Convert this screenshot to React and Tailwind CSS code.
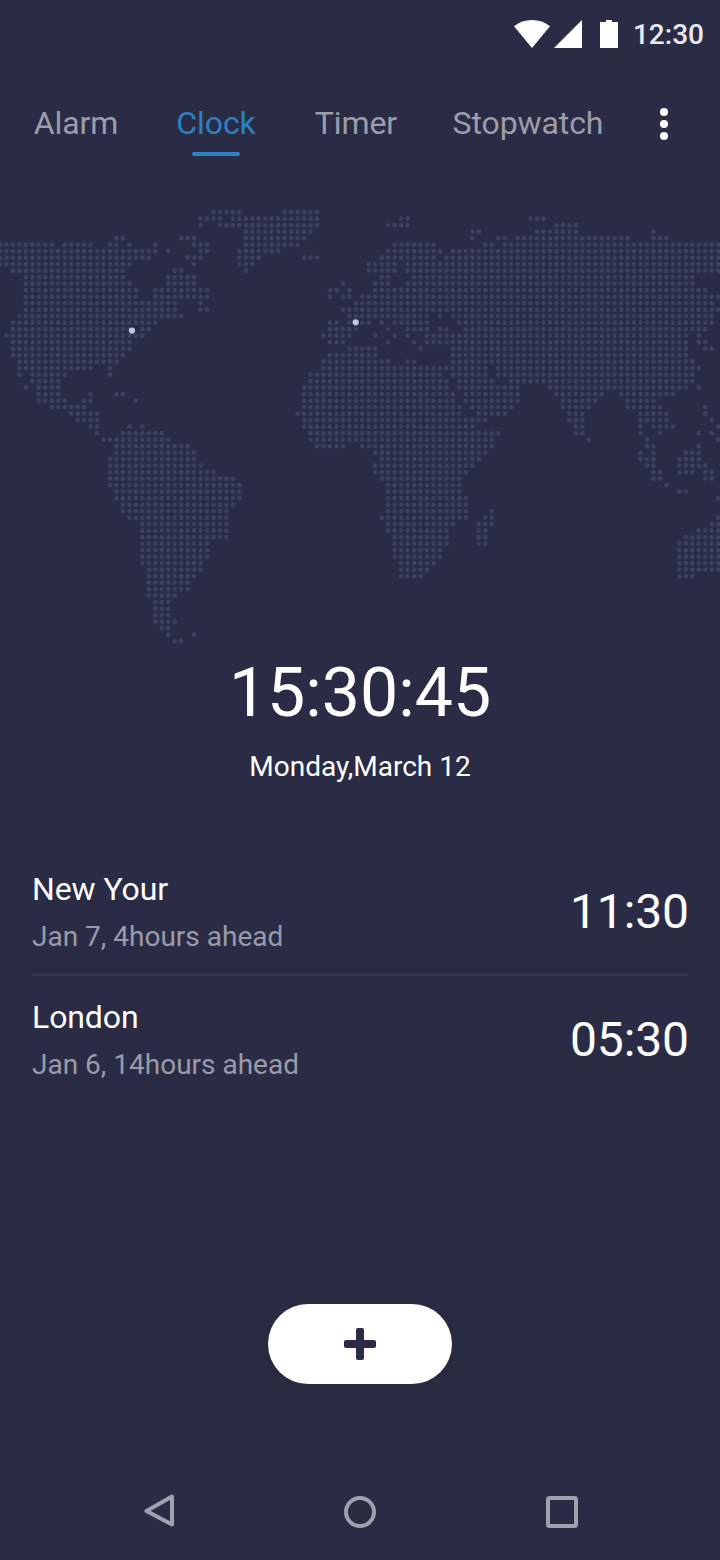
import React from "react";

// Land mass of the world map: for each row of dots, the [first, last] columns that are filled.
const LAND = [
  "33-37 44-49",
  "31-34 36-49 62-63 82-84",
  "31 34-49 60-63 86-89",
  "38-48 73-74 83-89 101",
  "18-19 28-30 38-47 73 77-78 80-97 101-103",
  "0-8 10-14 17-18 20 24 30-32 38-46 61-67 75-76 78-111",
  "0-24 26 31-32 37-43 60-68 70-111",
  "0-23 29-31 37-40 47-49 59-67 69-111",
  "0-20 30 37-39 57-61 63-111",
  "2-19 27-28 38 57-61 63-111",
  "4-19 26-30 59-60 64-107",
  "4-20 26-30 53 58-60 63-107",
  "4-21 24-32 51-52 54 58-109",
  "4-21 24-32 51 53-54 56-111",
  "4-27 31 55-110",
  "4-27 31-32 53-111",
  "3-28 54-66 68 70-110",
  "2-24 51-52 54-57 59 61-66 71-110",
  "2-20 22-23 51-55 60 63-66 68-69 72-109",
  "1-22 50-54 58 61 63 66-106 108",
  "2-20 51-53 60 64 66-106 108-109",
  "2-20 54-58 65 70-106 109-110",
  "2-19 51-58 70-106",
  "3-18 50-60 63-64 70-107",
  "3-14 17 50-75 77-108",
  "3 5-10 17 48-68 70-75 77-107",
  "5-9 48-69 71-76 79-107",
  "4 6-9 47-69 71-80 85-106 108",
  "6-9 14 18-19 47-70 72-80 86-93 96-104",
  "6-10 13-14 21 47-70 72-80 87-92 97-101",
  "8-13 47-71 73-79 87-91 97-102 109",
  "11-15 46-71 74-78 88-90 99-103 109",
  "12-15 47-75 88-90 99-103 110",
  "14-15 20 22 47-73 89-90 99 101-104 111",
  "15 19-25 48-77 89-90 99 102 108 110",
  "16-26 48-76 91 100 111",
  "18-29 49-53 56-76 100-101 108",
  "18-30 58-75 99 101 106-108",
  "17-30 59-74 99-101 105-108",
  "17-31 58-73 100-101 105-109",
  "17-33 58-72 101-102 105-107 109-110",
  "17-36 59-71 101-102 109-110",
  "17-37 60-71 103",
  "18-37 60-71 105-106",
  "18-37 60-72 111",
  "19-36 60-72",
  "19-35 60-72 76",
  "20-35 59-72 75-76 111",
  "22-35 60-70 74-76 110-111",
  "22-35 60-69 74-75 108-111",
  "22-35 61-69 74-75 106-111",
  "22-32 61-69 74-75 105-111",
  "22-32 61-68 105-111",
  "22-32 61-68 105-111",
  "22-31 62-67 105-111",
  "23-31 62-66 105-111",
  "23-30 62-65 105-107",
  "23-29",
  "23-29",
  "23-27",
  "24-26",
  "24-26",
  "24-26",
  "24-27",
  "25-26",
  "26 30",
  "27-28",
];

const DOTS = LAND.flatMap((row, r) =>
  row.split(" ").flatMap((run) => {
    const [a, b = a] = run.split("-").map(Number);
    return Array.from({ length: b - a + 1 }, (_, i) => [(a + i) * 6.47, 32.2 + r * 6.5]);
  })
);

const DOT_PATH = DOTS.map(
  ([x, y]) => `M${(x - 2.35).toFixed(2)} ${y.toFixed(2)}a2.35 2.35 0 1 0 4.7 0a2.35 2.35 0 1 0 -4.7 0`
).join("");

function StatusBar() {
  return (
    <header className="flex h-[68px] items-center justify-end pr-4">
      <svg className="h-7 w-[104px]" viewBox="0 0 104 28" fill="#fff">
        <path d="M0 6.2C5.2 2.2 11.4 0 18 0s12.800 2.200 18 6.200L18 28z" />
        <path d="M40 28L68 0v28z" />
        <path d="M86 2h6V0h6v2h6v26H86z" />
      </svg>
      <span className="ml-[15px] pt-0.5 text-[28px] leading-8 font-medium text-[#e9e9ec]">12:30</span>
    </header>
  );
}

function Tab({ label, active, wide }) {
  return (
    <button className={`flex flex-col items-center ${wide ? "w-[204px]" : "w-[140px]"}`}>
      <span className={`text-[32px] leading-[48px] tracking-[-0.1px] ${active ? "text-[#2d80c2]" : "text-[#9d9ca9]"}`}>
        {label}
      </span>
      {active && <span className="mt-[5px] h-1 w-12 rounded-full bg-[#2d80c2]" />}
    </button>
  );
}

function Tabs() {
  return (
    <nav className="flex h-28 items-start pt-[31px] pl-1.5">
      <Tab label="Alarm" />
      <Tab label="Clock" active />
      <Tab label="Timer" />
      <Tab label="Stopwatch" wide />
      <button className="flex h-[50px] w-[68px] flex-col items-center justify-center gap-1">
        <span className="size-2 rounded-full bg-white" />
        <span className="size-2 rounded-full bg-white" />
        <span className="size-2 rounded-full bg-white" />
      </button>
    </nav>
  );
}

function WorldMap() {
  return (
    <svg className="block h-[470px] w-[720px]" viewBox="0 0 720 470">
      <path d={DOT_PATH} fill="#3b405f" />
      <circle cx="132" cy="150.600" r="3.100" fill="#c3c7de" />
      <circle cx="355.700" cy="142.300" r="3.100" fill="#c3c7de" />
    </svg>
  );
}

function City({ name, detail, time }) {
  return (
    <li className="flex h-[128px] items-center justify-between">
      <div className="flex flex-col">
        <span className="text-[32px] leading-[48px] tracking-[-0.1px] text-white">{name}</span>
        <span className="text-[28px] leading-[46px] text-[#9a9aa8]">
          <span className="block pt-px leading-[45px]">{detail}</span>
        </span>
      </div>
      <span className="-mr-px text-[48px] leading-[56px] tracking-[-0.1px] text-white">{time}</span>
    </li>
  );
}

export default function App() {
  return (
    <div className="flex h-[1560px] w-[720px] flex-col overflow-hidden bg-[#2a2c45] font-['Roboto',sans-serif]">
      <StatusBar />
      <Tabs />
      <WorldMap />
      <section className="flex flex-col items-center pt-px text-white">
        <span className="text-[68px] leading-[84px]">15:30:45</span>
        <span className="mt-4 text-[28px] leading-8">Monday,March 12</span>
      </section>
      <ul className="mx-8 mt-[65px] flex flex-col">
        <City name="New Your" detail="Jan 7, 4hours ahead" time="11:30" />
        <li className="-mt-0.5 h-0.5 bg-[#36374d]" />
        <City name="London" detail="Jan 6, 14hours ahead" time="05:30" />
      </ul>
      <div className="mt-auto flex h-20 justify-center">
        <button className="flex h-20 w-[184px] items-center justify-center rounded-full bg-white shadow-[0_4px_24px_rgba(40,42,48,0.5)]">
          <svg className="size-8" viewBox="0 0 32 32" fill="#2a2b45">
            <rect x="12" width="8" height="32" rx="2" />
            <rect y="12" width="32" height="8" rx="2" />
          </svg>
        </button>
      </div>
      <footer className="mt-20 flex h-24 items-center gap-[165px] pl-[142px]">
        <svg className="size-9" viewBox="0 0 36 36" fill="none" stroke="#a1a0ad" strokeWidth="4" strokeLinejoin="round">
          <path d="M30 2.500V30.500L4.500 17z" />
        </svg>
        <svg className="-ml-px size-9" viewBox="0 0 36 36" fill="none" stroke="#a1a0ad" strokeWidth="4">
          <circle cx="18" cy="18" r="14" />
        </svg>
        <svg className="ml-px size-9" viewBox="0 0 36 36" fill="none" stroke="#a1a0ad" strokeWidth="4">
          <rect x="4" y="4" width="28" height="28" rx="1.500" />
        </svg>
      </footer>
    </div>
  );
}
